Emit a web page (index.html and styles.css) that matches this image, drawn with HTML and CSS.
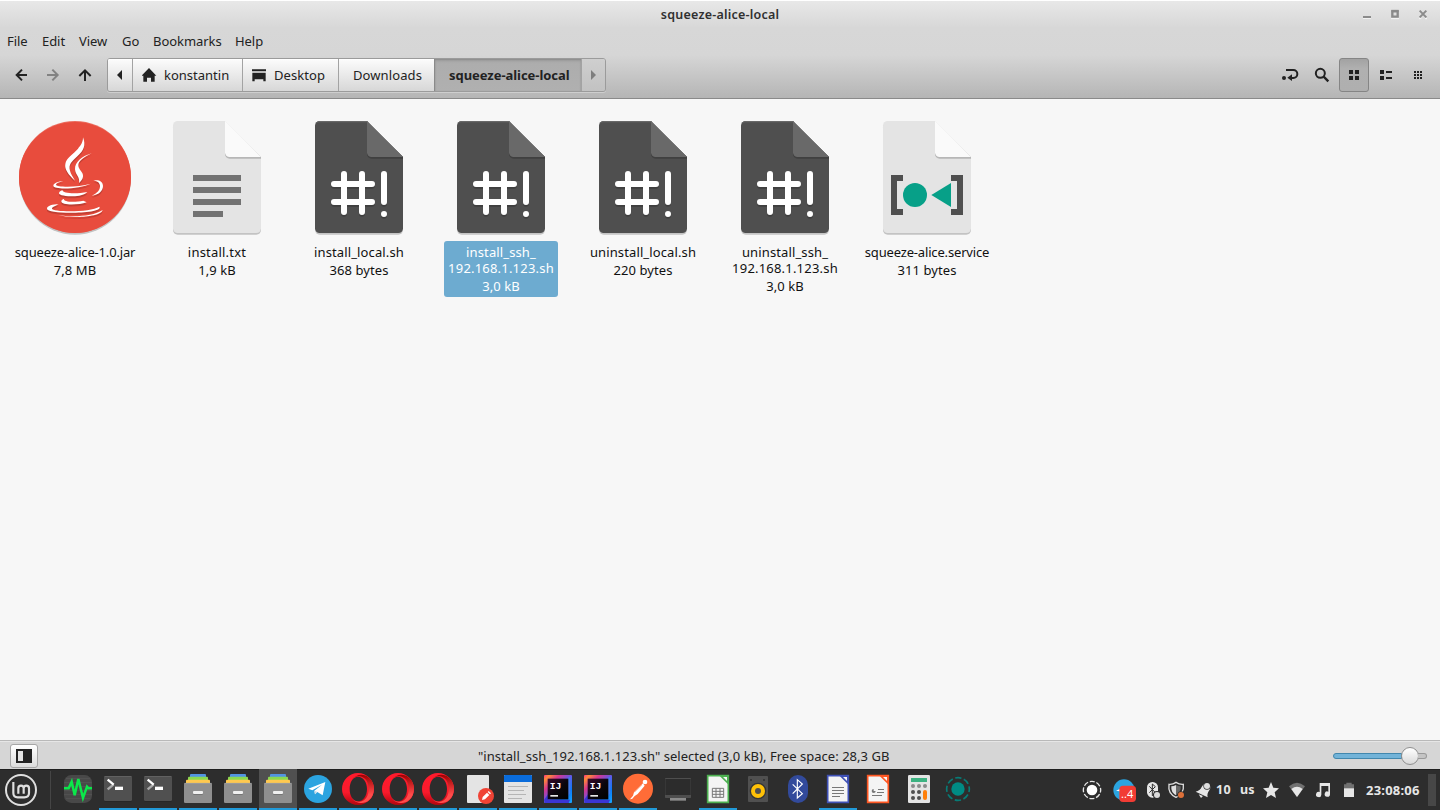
FILE: index.html
```html
<!DOCTYPE html>
<html lang="en">
<head>
<meta charset="utf-8">
<title>squeeze-alice-local</title>
<link rel="stylesheet" href="styles.css">
</head>
<body>
<svg class="defs" width="0" height="0">
  <defs>
    <symbol id="script" viewBox="-3 27 360 348">
      <path d="M59 38H201L309 146V360a14 14 0 0 1-14 14H59a14 14 0 0 1-14-14V52a14 14 0 0 1 14-14Z" fill="#c4c4c4"/>
      <path d="M59 33H201L309 141V355a14 14 0 0 1-14 14H59a14 14 0 0 1-14-14V47a14 14 0 0 1 14-14Z" fill="#4f4f4f"/>
      <path d="M47 41q3-8 12-8H201l4 4H59q-8 0-12 4Z" fill="#686868"/>
      <path d="M201 37v94a14 14 0 0 0 14 15h94v-5Z" fill="#404040"/>
      <path d="M201 33v94a14 14 0 0 0 14 14h94Z" fill="#696969"/>
      <g fill="none" stroke-width="18" stroke-linecap="round">
        <path transform="translate(0 5)" stroke="#3f3f3f" d="M132 192v114M186 192v114M102 222h114M102 276h114M252 192v84M252 312v.1"/>
        <path stroke="#fff" d="M132 192v114M186 192v114M102 222h114M102 276h114M252 192v84M252 312v.1"/>
      </g>
    </symbol>
    <symbol id="term" viewBox="297 102 114 123">
      <rect x="312" y="126" width="84" height="74" rx="4" fill="#262626"/>
      <rect x="312" y="123" width="84" height="75" rx="4" fill="#505050"/>
      <path d="M314 124.500H394" stroke="#6a6a6a" stroke-width="2"/>
      <path d="M323 163l18-15" stroke="#a9a9a9" stroke-width="7" fill="none"/>
      <path d="M323 134l18 15" stroke="#fff" stroke-width="7" fill="none"/>
      <rect x="345" y="155" width="24" height="10" fill="#fff"/>
    </symbol>
    <symbol id="files" viewBox="537 102 114 123">
      <rect x="570" y="117" width="48" height="12" rx="3" fill="#5294e2"/>
      <rect x="564" y="125" width="60" height="12" rx="3" fill="#8bd950"/>
      <rect x="558" y="134" width="72" height="14" rx="3" fill="#ffc94f"/>
      <rect x="552" y="144" width="84" height="60" rx="4" fill="#8f8f8f"/>
      <path d="M553 145h82" stroke="#a5a5a5" stroke-width="2"/>
      <rect x="579" y="170" width="30" height="9" rx="3" fill="#6e6e6e"/>
      <rect x="579" y="168" width="30" height="9" rx="3" fill="#f0f0f0"/>
    </symbol>
    <linearGradient id="opl" x1="0" y1="0" x2="0" y2="1"><stop offset="0" stop-color="#ff1b2d"/><stop offset=".6" stop-color="#fa1a2c"/><stop offset="1" stop-color="#b0050f"/></linearGradient>
    <linearGradient id="opr" x1="0" y1="0" x2="0" y2="1"><stop offset="0" stop-color="#9c0000"/><stop offset=".7" stop-color="#ff4b4b"/><stop offset="1" stop-color="#ff4b4b"/></linearGradient>
    <symbol id="opera" viewBox="117 12 114 123">
      <path fill-rule="evenodd" fill="url(#opl)" d="M174 24a48 48 0 1 0 0 96a48 48 0 1 0 0-96ZM174 35c15 0 27 16 27 37s-12 37-27 37s-25-16-25-37s10-37 25-37Z"/>
      <path fill="url(#opr)" d="M155 45c8-10 15-12 24-11c17 3 27 17 27 38s-10 36-27 38c-9 1-17-3-24-11c10 15 36 22 52 7c20-18 20-51 0-68c-18-15-41-9-52 7Z"/>
    </symbol>
    <linearGradient id="ijg" x1="0" y1="0" x2="1" y2="1"><stop offset="0" stop-color="#ff318c"/><stop offset=".1" stop-color="#ff8a35"/><stop offset=".28" stop-color="#d5368f"/><stop offset=".5" stop-color="#6257e8"/><stop offset=".75" stop-color="#087cfa"/><stop offset="1" stop-color="#19a7ff"/></linearGradient>
    <linearGradient id="ijb" x1="0" y1="0" x2="1" y2="1"><stop offset="0" stop-color="#380a2c"/><stop offset=".55" stop-color="#09050c"/><stop offset="1" stop-color="#000"/></linearGradient>
    <symbol id="idea" viewBox="717 12 114 123">
      <rect x="732" y="30" width="84" height="84" rx="3" fill="url(#ijg)"/>
      <path d="M732 105l12-17v16h66l-4 10h-71Z" fill="#3b36d5"/>
      <path d="M801 42l10-8v50l-10 15Z" fill="#437bea"/>
      <rect x="743" y="41" width="62" height="62" fill="url(#ijb)"/>
      <text x="749" y="72" class="ij">IJ</text>
      <rect x="751" y="90" width="23" height="5" fill="#e8e8e8"/>
    </symbol>
  </defs>
</svg>

<header class="chrome">
  <div class="titlebar">
    <span class="title">squeeze-alice-local</span>
    <svg class="winctl" width="80" height="28" viewBox="1120 0 240 84">
      <g transform="translate(760 0)" fill="none">
        <path d="M369 55h24M453 56h24M537 56h7M555 56h6" stroke="#f7f7f7" stroke-width="3"/>
        <rect x="369" y="48" width="24" height="6" fill="#8b8b8b"/>
        <path d="M457 34h16v16h-16Z" stroke="#8b8b8b" stroke-width="7"/>
        <path d="M454 32.500h22" stroke="#8b8b8b" stroke-width="6"/>
        <path d="M539 32l20 20M559 32l-20 20" stroke="#8b8b8b" stroke-width="6"/>
      </g>
    </svg>
  </div>
  <nav class="menubar">
    <span class="m-file">File</span><span class="m-edit">Edit</span><span class="m-view">View</span><span class="m-go">Go</span><span class="m-book">Bookmarks</span><span class="m-help">Help</span>
  </nav>
  <div class="toolbar">
    <svg class="nav" width="107" height="34" viewBox="0 174 321 102" fill="none" stroke-width="6">
      <path d="M81 225H51M66 209L50 225L66 241" stroke="#222"/>
      <path d="M141 225H171M157 209L173 225L157 241" stroke="#828282"/>
      <path d="M255 243V212M238 228L255 211L272 228" stroke="#222"/>
    </svg>
    <div class="pathbar">
      <span class="crumb back"><svg width="8" height="12" viewBox="0 0 8 12"><path d="M6 1v10L1 6Z" fill="#222"/></svg></span>
      <span class="crumb home"><svg width="15" height="14" viewBox="427 203 45 42"><path d="M448 203L470 226h-5v18h-11v-12h-12v12h-11v-18h-5Z" fill="#222"/></svg><b class="t-kon">konstantin</b></span>
      <span class="crumb desk"><svg width="14" height="13" viewBox="756 206 42 39"><path d="M756 207h42v6h-42ZM757 217h40v26h-7v-6h-26v6h-7Z" fill="#222"/></svg><b class="t-desk">Desktop</b></span>
      <span class="crumb down"><b class="t-down">Downloads</b></span>
      <span class="crumb current"><b class="t-cur">squeeze-alice-local</b></span>
      <span class="crumb fwd"><svg width="8" height="12" viewBox="0 0 8 12"><path d="M1 1v10L6 6Z" fill="#7e7e7e"/></svg></span>
    </div>
    <div class="tools">
      <svg width="64" height="34" viewBox="102 174 192 102" fill="none" stroke="#222" stroke-width="6">
        <path d="M138 210h22a12 12 0 0 1 0 24h-10"/><path d="M156 223v20l-14-10Z" fill="#222" stroke="none"/><circle cx="132" cy="234" r="6" fill="#222" stroke="none"/>
        <circle cx="241" cy="220" r="13.500"/><path d="M251 230l14 14" stroke-width="7"/>
      </svg>
      <span class="viewbtn"><svg width="10" height="10" viewBox="0 0 10 10"><path d="M0 0h4v4H0ZM6 0h4v4H6ZM0 6h4v4H0ZM6 6h4v4H6Z" fill="#222"/></svg></span>
      <svg width="71" height="34" viewBox="387 174 213 102" fill="#222">
        <path d="M420 210h12v12h-12ZM420 228h12v12h-12ZM438 213h18v6h-18ZM438 231h18v6h-18Z"/>
        <path d="M522 213h6v6h-6ZM531 213h6v6h-6ZM540 213h6v6h-6ZM522 222h6v6h-6ZM531 222h6v6h-6ZM540 222h6v6h-6ZM522 231h6v6h-6ZM531 231h6v6h-6ZM540 231h6v6h-6Z"/>
      </svg>
    </div>
  </div>
</header>

<main class="files">
  <div class="file">
    <svg width="120" height="116" viewBox="45 27 360 348">
      <circle cx="225" cy="206" r="168" fill="#c2c2c2"/>
      <circle cx="225" cy="201" r="168" fill="#eb6e60"/>
      <path d="M57 201A168 166 0 0 1 393 203A168 166 0 0 1 57 203Z" fill="#e84c3d"/>
      <g class="cupshade" fill="#fff">
        <path d="M249 82c9 24 3 39-17 57c-18 17-27 25-22 43c2 9 8 16 15 30c-20-18-32-34-29-50c3-19 23-28 38-46c8-10 15-18 15-34Z"/>
        <path d="M275 130c-25 13-40 23-40 36c0 14 16 20 14 34c-1 8-7 14-12 19c4-17-11-24-12-41c-1-22 22-40 50-48Z"/>
        <path d="M190 213c-14 4-22 7-22 11c0 8 66 9 104-3c-31 16-111 19-112 6c0-7 15-13 30-14Z"/>
        <path d="M280 212c14-4 29 1 29 16c0 15-13 27-34 29c17-7 25-17 25-28c0-10-7-17-20-17Z"/>
        <path d="M188 241c-2 9 39 12 74 5c-5 6-13 9-24 11c-31 5-68 0-60-10c2-3 5-5 10-6Z"/>
        <path d="M192 267c-2 9 31 11 58 5l10 5c-23 9-77 10-76-3c0-3 3-6 8-7Z"/>
        <path d="M176 283c-10 5-20 8-20 13c0 10 116 12 142-6c9 13-45 18-86 18c-38 0-71-4-71-12c0-9 17-13 35-13Z"/>
        <path d="M174 315c42 7 105 5 134-15c-5 17-54 21-81 21c-20 0-40-2-53-6Z"/>
      </g>
    </svg>
    <div class="label"><span class="t-jar">squeeze-alice-1.0.jar</span><small>7,8 MB</small></div>
  </div>
  <div class="file">
    <svg width="120" height="116" viewBox="471 27 360 348">
      <path d="M533 38H675L783 146V360a14 14 0 0 1-14 14H533a14 14 0 0 1-14-14V52a14 14 0 0 1 14-14Z" fill="#c3c3c3"/>
      <path d="M533 33H675L783 141V355a14 14 0 0 1-14 14H533a14 14 0 0 1-14-14V47a14 14 0 0 1 14-14Z" fill="#e4e4e4"/>
      <path d="M675 37v94a14 14 0 0 0 14 15h94v-5Z" fill="#b7b7b7"/>
      <path d="M675 33v94a14 14 0 0 0 14 14h94Z" fill="#fafafa"/>
      <path d="M579 195h144v18H579ZM579 231h144v18H579ZM579 267h144v18H579ZM579 303h90v18h-90Z" fill="#727272"/>
    </svg>
    <div class="label"><span class="t-txt">install.txt</span><small>1,9 kB</small></div>
  </div>
  <div class="file"><svg width="120" height="116"><use href="#script"/></svg>
    <div class="label"><span class="t-local">install_local.sh</span><small>368 bytes</small></div></div>
  <div class="file selected"><svg width="120" height="116"><use href="#script"/></svg>
    <div class="label"><span class="t-ssh">install_ssh_</span><span class="t-ip">192.168.1.123.sh</span><small>3,0 kB</small></div></div>
  <div class="file"><svg width="120" height="116"><use href="#script"/></svg>
    <div class="label"><span class="t-local">uninstall_local.sh</span><small>220 bytes</small></div></div>
  <div class="file"><svg width="120" height="116"><use href="#script"/></svg>
    <div class="label"><span class="t-ssh">uninstall_ssh_</span><span class="t-ip">192.168.1.123.sh</span><small>3,0 kB</small></div></div>
  <div class="file">
    <svg width="120" height="116" viewBox="471 27 360 348">
      <path d="M533 38H675L783 146V360a14 14 0 0 1-14 14H533a14 14 0 0 1-14-14V52a14 14 0 0 1 14-14Z" fill="#c3c3c3"/>
      <path d="M533 33H675L783 141V355a14 14 0 0 1-14 14H533a14 14 0 0 1-14-14V47a14 14 0 0 1 14-14Z" fill="#e4e4e4"/>
      <path d="M675 37v94a14 14 0 0 0 14 15h94v-5Z" fill="#b7b7b7"/>
      <path d="M675 33v94a14 14 0 0 0 14 14h94Z" fill="#fafafa"/>
      <g transform="translate(30 0)">
        <path d="M513 195h36v18h-18v84h18v18h-36ZM729 195h-36v18h18v84h-18v18h36Z" fill="#4f4f4f"/>
        <circle cx="585" cy="255" r="36" fill="#07a088"/><path d="M693 219v72L634 255Z" fill="#07a088"/>
      </g>
    </svg>
    <div class="label"><span class="t-svc">squeeze-alice.service</span><small>311 bytes</small></div>
  </div>
</main>

<footer class="status">
  <span class="sidebtn"><svg width="16" height="14" viewBox="0 0 16 14"><path d="M0 0h16v14H0Z" fill="#222"/><path d="M2 2h5v10H2Z" fill="#e4e4e4"/></svg></span>
  <span class="msg">"install_ssh_192.168.1.123.sh" selected (3,0 kB), Free space: 28,3 GB</span>
  <span class="slider"><i class="track"></i><i class="rest"></i><i class="knob"></i></span>
</footer>

<div class="panel">
  <svg class="mint" width="50" height="41" viewBox="0 102 150 123" fill="none" stroke="#dfdfdf">
    <circle cx="63" cy="165" r="45" stroke-width="6"/>
    <path d="M40 141v33q0 13 13 13h20q14 0 14-13v-14a8 8 0 0 0-16 0v16M71 160a8 8 0 0 0-16 0v16" stroke-width="6.500"/>
  </svg>
  <i class="sep"></i>
  <div class="tasks">
    <span class="task off"><svg width="38" height="41" viewBox="177 102 114 123"><rect x="192" y="120" width="84" height="84" rx="22" fill="#484848"/><path d="M198 131h72M193 143h82M192 155h84M192 167h84M192 179h84M198 191h72" stroke="#595959" stroke-width="2"/><path d="M192 160h14l9-20 9 41 11-49 14 57 12-34 4 5h11" fill="none" stroke="#0be84a" stroke-width="7.500"/></svg></span>
    <span class="task"><svg width="38" height="41"><use href="#term"/></svg></span>
    <span class="task"><svg width="38" height="41"><use href="#term"/></svg></span>
    <span class="task"><svg width="38" height="41"><use href="#files"/></svg></span>
    <span class="task"><svg width="38" height="41"><use href="#files"/></svg></span>
    <span class="task active"><svg width="38" height="41"><use href="#files"/></svg></span>
    <span class="task"><svg width="38" height="41" viewBox="-3 12 114 123"><circle cx="54" cy="72" r="42" fill="#2ba4e0"/><path d="M25 71L76 51L68 91L52 81L45 88L43 77L66 59L37 76Z" fill="#fff"/><path d="M43 77l2 11 7-7Z" fill="#c2d8e6"/></svg></span>
    <span class="task"><svg width="38" height="41"><use href="#opera"/></svg></span>
    <span class="task"><svg width="38" height="41"><use href="#opera"/></svg></span>
    <span class="task"><svg width="38" height="41"><use href="#opera"/></svg></span>
    <span class="task"><svg width="38" height="41" viewBox="477 12 114 123"><rect x="501" y="30" width="66" height="84" rx="3" fill="#e4e4e4"/><circle cx="558" cy="93" r="24" fill="#f04335"/><path d="M546 105l2-9 13-13 7 7-13 13ZM563 81l3-3 7 7-3 3Z" fill="#fff"/></svg></span>
    <span class="task"><svg width="38" height="41" viewBox="597 12 114 123"><rect x="612" y="30" width="84" height="84" rx="3" fill="#e4e4e4"/><path d="M612 51V33q0-3 3-3h78q3 0 3 3v18Z" fill="#0a6cdb"/><path d="M624 64.500h60M624 76.500h48M624 88.500h54M624 100.500h42" stroke="#b5b5b5" stroke-width="3"/></svg></span>
    <span class="task"><svg width="38" height="41"><use href="#idea"/></svg></span>
    <span class="task"><svg width="38" height="41"><use href="#idea"/></svg></span>
    <span class="task"><svg width="38" height="41" viewBox="237 12 114 123"><circle cx="294" cy="71" r="45" fill="#ff6c37"/><circle cx="315" cy="51" r="7" fill="#fff"/><path d="M309 55l5 7-21 25-9 6-7 8-7 2 9-11 3-10Z" fill="#fff"/><path d="M306 60l-22 22" stroke="#ff9a74" stroke-width="1.500"/></svg></span>
    <span class="task off"><svg width="38" height="41" viewBox="357 12 114 123"><rect x="375" y="39" width="78" height="60" rx="2" fill="#4e4e4e"/><path d="M376 42h76v48h-76Z" fill="#2c2c2c"/><path d="M390 99h48v8h-48Z" fill="#8b8b8b"/></svg></span>
    <span class="task"><svg width="38" height="41" viewBox="477 12 114 123"><path d="M503 32h62v80h-62Z" fill="#f4f4f4" stroke="#4caf50" stroke-width="5"/><path d="M536 30h31v31Z" fill="#4caf50"/><path d="M549 36h12v12Z" fill="#f4f4f4"/><path d="M517 70h34v27h-34ZM517 79h34M517 88h34M528 70v27M540 70v27" fill="none" stroke="#777" stroke-width="3"/></svg></span>
    <span class="task off"><svg width="38" height="41" viewBox="597 12 114 123"><rect x="624" y="33" width="60" height="78" rx="3" fill="#505050"/><circle cx="633" cy="45" r="3" fill="#2e2e2e"/><circle cx="672" cy="45" r="3" fill="#2e2e2e"/><circle cx="654" cy="78" r="25" fill="#353535"/><circle cx="654" cy="78" r="21" fill="#ffc107"/><circle cx="654" cy="78" r="9" fill="#505050"/></svg></span>
    <span class="task off"><svg width="38" height="41" viewBox="57 12 114 123"><rect x="84" y="30" width="60" height="84" rx="30" fill="#324a9b"/><path d="M98 58l29 28-15 13V44l15 13-29 29" fill="none" stroke="#fff" stroke-width="3.500"/></svg></span>
    <span class="task"><svg width="38" height="41" viewBox="177 12 114 123"><path d="M203 32h62v80h-62Z" fill="#f4f4f4" stroke="#3f51b5" stroke-width="5"/><path d="M236 30h31v31Z" fill="#3f51b5"/><path d="M249 36h12v12Z" fill="#f4f4f4"/><path d="M216 67.500h36M216 76.500h36M216 85.500h36M216 94.500h24" stroke="#777" stroke-width="3"/></svg></span>
    <span class="task off"><svg width="38" height="41" viewBox="297 12 114 123"><path d="M323 32h62v80h-62Z" fill="#f4f4f4" stroke="#ff5722" stroke-width="5"/><path d="M356 30h31v31Z" fill="#ff5722"/><path d="M369 36h12v12Z" fill="#f4f4f4"/><path d="M354 73.500h18M351 82.500h21M336 91.500h30" stroke="#777" stroke-width="3"/><path d="M341 72v6h6a6 6 0 1 1-6-6Z" fill="#777"/></svg></span>
    <span class="task off"><svg width="38" height="41" viewBox="417 12 114 123"><rect x="444" y="30" width="66" height="84" rx="4" fill="#e4e4e4"/><rect x="453" y="39" width="48" height="12" rx="1" fill="#3cb281"/><g fill="#8b8b8b"><circle cx="459" cy="63" r="6"/><circle cx="477" cy="63" r="6"/><circle cx="495" cy="63" r="6"/></g><g fill="#4f4f4f"><circle cx="459" cy="81" r="6"/><circle cx="477" cy="81" r="6"/><circle cx="459" cy="99" r="6"/><circle cx="477" cy="99" r="6"/></g><rect x="489" y="75" width="12" height="30" rx="6" fill="#ff7f0a"/></svg></span>
    <span class="task off"><svg width="38" height="41" viewBox="537 12 114 123"><circle cx="594" cy="72" r="20" fill="#008b84"/><circle cx="594" cy="72" r="34" fill="none" stroke="#087b76" stroke-width="5" stroke-dasharray="19 7.700" stroke-dashoffset="9.500"/></svg></span>
  </div>
  <div class="tray">
    <svg width="32" height="41" viewBox="18 102 96 123"><circle cx="66" cy="165" r="16" fill="#fff"/><circle cx="66" cy="165" r="26" fill="none" stroke="#e6e6e6" stroke-width="4" stroke-dasharray="15 5.420" stroke-dashoffset="7.500"/></svg>
    <svg width="32" height="41" viewBox="114 102 96 123"><circle cx="162" cy="165" r="32" fill="#2ba4e0"/><path d="M138 167l20-9v12Z" fill="#fff"/><rect x="148" y="152" width="50" height="49" rx="11" fill="#f23c34"/><text x="153" y="190" class="badge">..4</text></svg>
    <svg width="24" height="41" viewBox="210 102 72 123"><rect x="231" y="141" width="33" height="47" rx="16" fill="#e6e6e6"/><path d="M238 154l18 19-9 9v-35l9 8-18 18" fill="none" stroke="#2d2d2d" stroke-width="3"/><circle cx="261" cy="180" r="12" fill="#2d2d2d"/><circle cx="261" cy="180" r="9" fill="#dadada"/></svg>
    <svg width="24" height="41" viewBox="282 102 72 123"><path d="M318 142q10 7 22 6q3 28-22 39q-25-11-21-39q11 1 21-6Z" fill="none" stroke="#dedede" stroke-width="4"/><path d="M318 150q7 4 14 4q2 18-14 27Z" fill="#666"/><path d="M318 150q-7 4-14 4q-2 18 14 27Z" fill="#dedede"/><circle cx="333" cy="180" r="11" fill="#2d2d2d"/><circle cx="333" cy="180" r="9" fill="#dd7039"/></svg>
    <svg width="27" height="41" viewBox="354 102 81 123"><path d="M377 170q13-3 18-14q8-14 20-9q11 6 3 19q-8 11-5 21Z" fill="#e6e6e6"/><path d="M386 178l13 5-6 6Z" fill="#e6e6e6"/><circle cx="411" cy="153" r="11" fill="#2d2d2d"/><circle cx="411" cy="153" r="9" fill="#dedede"/></svg>
    <span class="n10">10</span><span class="us">us</span>
    <svg width="24" height="41" viewBox="570 102 72 123"><path d="M603 141l7 17 17 2-13 12 4 17-15-9-15 9 4-17-13-12 17-2Z" fill="#e6e6e6"/></svg>
    <svg width="26" height="41" viewBox="642 102 78 123"><path d="M657 154q24-21 48 0l-24 32Z" fill="#707070"/><path d="M664 162q17-14 34 0l-17 24Z" fill="#e6e6e6"/></svg>
    <svg width="26" height="41" viewBox="720 102 78 123"><path d="M749 144h31v33a8 8 0 1 1-5-7v-17h-21v26a8 8 0 1 1-5-8Z" fill="#e6e6e6"/></svg>
    <svg width="26" height="41" viewBox="798 102 78 123"><path d="M822 148h7v-5h16v5h7v38h-30Z" fill="#707070"/><path d="M822 160h30v26h-30Z" fill="#e6e6e6"/></svg>
    <span class="clock">23:08:06</span>
    <i class="showdesk"></i>
  </div>
</div>
</body>
</html>
```
FILE: styles.css
```css
* { box-sizing: border-box; }
body { margin: 0; width: 1440px; height: 810px; display: flex; flex-direction: column; overflow: hidden; background: #f7f7f7; color: #222; font: 13px/18px "Noto Sans", "Open Sans", sans-serif; white-space: nowrap; }
svg { display: block; flex: none; }
.defs { position: absolute; }
i { display: block; }

.chrome { height: 99px; flex: none; border-bottom: 1px solid #8a8a8a; background: linear-gradient(#fff 0, #fff 1px, #e8e8e8 1px, #d7d7d7 28px, #d6d6d6 55px, #b5b5b5 98px); }
.titlebar { height: 28px; display: grid; grid-template-columns: 80px 1fr 80px; align-items: center; }
.title { grid-column: 2; text-align: center; font-weight: 600; font-size: 12.5px; letter-spacing: .22px; padding-top: 1px; color: #303030; }
.menubar { height: 27px; display: flex; align-items: center; padding: 0 0 2px 7px; letter-spacing: -.05px; }
.m-file { width: 35px; }
.m-edit { width: 37px; }
.m-view { width: 43px; }
.m-go { width: 31px; }
.m-book { width: 82px; }
.toolbar { height: 43px; padding-top: 3px; display: flex; align-items: flex-start; }
.pathbar { display: flex; height: 34px; border: 1px solid #9b9b9b; border-radius: 3px; box-shadow: 0 1px #cecece; }
.crumb { display: flex; align-items: center; border-right: 1px solid #a3a3a3; background: linear-gradient(#fcfcfc, #d7d7d7); box-shadow: inset 0 1px #fff; }
.crumb b { font-weight: 400; }
.back { width: 25px; padding-left: 8px; border-radius: 2px 0 0 2px; }
.home { width: 110px; padding-left: 9px; gap: 7px; }
.desk { width: 96px; padding-left: 9px; gap: 8px; }
.crumb .t-desk { letter-spacing: .08px; }
.down { width: 96px; padding-left: 14px; border-right-color: #8a8a8a; }
.crumb .t-down { letter-spacing: .1px; }
.current { width: 147px; padding-left: 14px; background: linear-gradient(#a3a3a3, #adadad 15%, #b0b0b0); box-shadow: inset 0 1px 2px #8a8a8a; }
.crumb .t-cur { font-weight: 700; letter-spacing: -.05px; }
.fwd { width: 23px; padding-left: 8px; border-right: 0; background: linear-gradient(#cfcfcf, #c2c2c2); box-shadow: none; border-radius: 0 2px 2px 0; }
.tools { margin-left: auto; display: flex; }
.viewbtn { width: 30px; height: 34px; margin-left: 1px; border: 1px solid #858585; border-radius: 3px; background: linear-gradient(#a2a2a2, #b0b0b0 30%, #afafaf); display: grid; place-items: center; }

.files { flex: 1; display: flex; align-items: flex-start; padding: 20px 0 0 4px; }
.file { width: 142px; display: flex; flex-direction: column; align-items: center; color: #111; }
.label { margin-top: 6px; padding: 3px 4px; border-radius: 3px; display: flex; flex-direction: column; align-items: center; line-height: 16px; min-width: 114px; }
.label small { font-size: 13px; margin-top: 2px; letter-spacing: .1px; }
.t-jar, .t-svc { letter-spacing: -.17px; }
.t-txt { letter-spacing: .2px; }
.t-local { letter-spacing: .12px; }
.t-ssh { letter-spacing: .12px; }
.t-ip { letter-spacing: .2px; }
.selected .label { background: #6dabd0; color: #fff; width: 114px; }
.cupshade { filter: drop-shadow(0 5px 0 #b73b30); }

.status { height: 29px; flex: none; border-top: 1px solid #b9b9b9; background: #d6d6d6; box-shadow: inset 0 1px #e6e6e6; display: grid; grid-template-columns: 107px 1fr 107px; align-items: center; padding-top: 2px; }
.sidebtn { width: 28px; height: 24px; margin-left: 10px; border: 1px solid #a6a6a6; border-radius: 3px; background: linear-gradient(#fff, #dcdcdc); display: grid; place-items: center; }
.msg { margin-left: 371px; letter-spacing: .03px; }
.slider { display: flex; align-items: center; height: 20px; }
.track { width: 69px; height: 6px; border: 1px solid #4287ad; border-radius: 3px 0 0 3px; background: #72b3d8; }
.rest { order: 3; width: 9px; height: 6px; border: 1px solid #999; border-left: 0; border-radius: 0 3px 3px 0; background: #c4c4c4; }
.knob { order: 2; width: 18px; height: 18px; margin: 0 -1px; border: 1px solid #8f8f8f; border-radius: 50%; background: linear-gradient(#fff, #d9d9d9); }

.panel { height: 41px; flex: none; display: flex; background: linear-gradient(#1e1e1e 1px, #2d2d2d 1px); color: #e6e6e6; }
.sep { width: 1px; height: 38px; margin-top: 2px; background: #454545; }
.tasks { display: flex; gap: 2px; padding-left: 8px; }
.task { width: 38px; height: 41px; background: linear-gradient(#219ad9, #219ad9) bottom / 38px 2px no-repeat; }
.task.off { background: none; }
.task.active { background-color: #505050; }
.ij { font: 700 29px "Liberation Mono", monospace; fill: #fff; }
.badge { font: 33px "Noto Sans", sans-serif; fill: #fff; }
.tray { margin-left: auto; width: 364px; display: flex; align-items: center; font-weight: 700; font-size: 12.5px; }
.n10 { width: 25px; padding-left: 1px; letter-spacing: .3px; }
.us { width: 20px; }
.clock { width: 66px; padding-left: 4px; font-size: 13px; letter-spacing: .2px; }
.showdesk { width: 8px; height: 32px; background: #474747; }
```
